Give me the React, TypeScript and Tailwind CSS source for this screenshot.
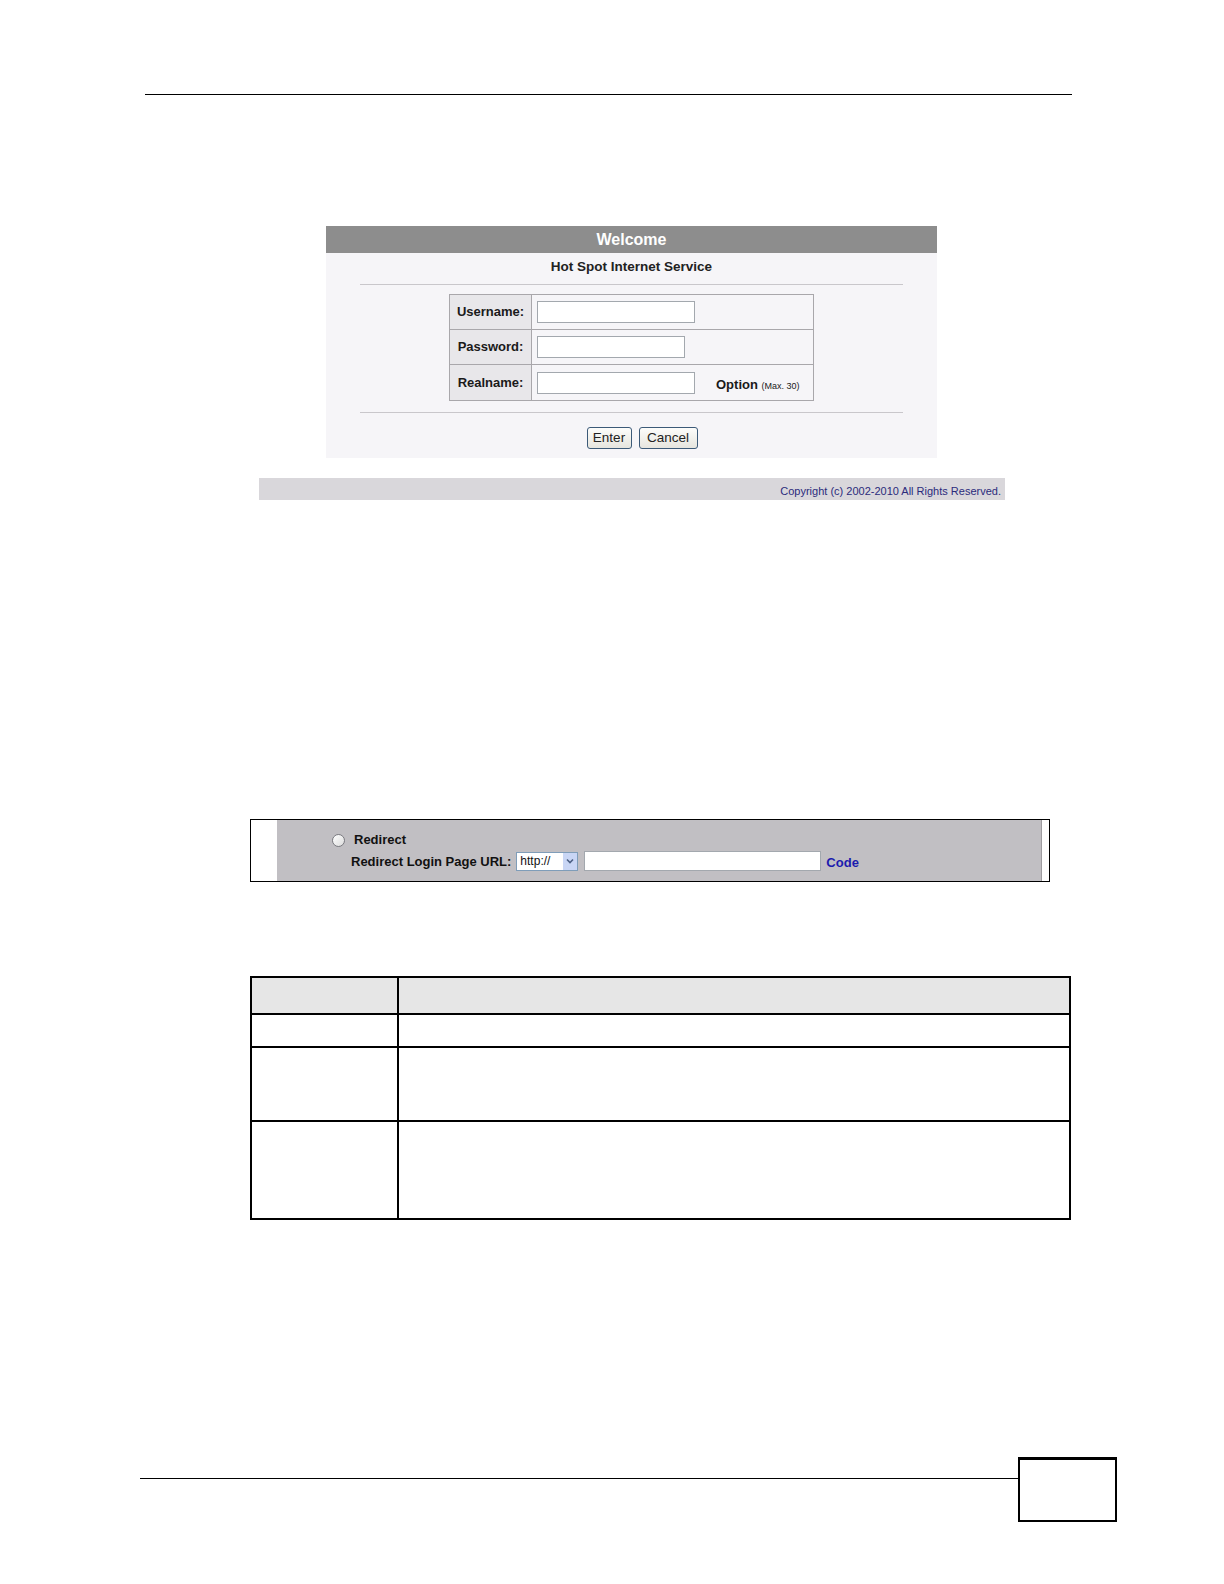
import React from "react";

const F = { fontFamily: '"Liberation Sans", Arial, sans-serif' };

function LoginRow({ label, inputW, extra, last }: { label: string; inputW: string; extra?: React.ReactNode; last?: boolean }) {
  return (
    <div className={`flex h-[35px] ${last ? "" : "border-b border-[#a9a7ab]"}`}>
      <div className="w-[82px] shrink-0 bg-[#e8e7ea] border-r border-[#a9a7ab] flex items-center justify-center text-[13px] font-bold text-[#1a1a1a]">
        {label}
      </div>
      <div className="flex-1 flex items-center pl-[5px]">
        <div className={`${inputW} h-[22px] bg-white border border-[#a3a8ae]`} />
        {extra}
      </div>
    </div>
  );
}

export default function App() {
  return (
    <div className="w-[1224px] h-[1584px] bg-white overflow-hidden" style={F}>
      {/* top rule */}
      <div className="pt-[94px] pl-[145px]">
        <div className="w-[927px] h-px bg-black" />
      </div>

      {/* Welcome login box */}
      <div className="ml-[326px] mt-[131px] w-[611px]">
        <div className="h-[27px] bg-[#8d8d8d] text-white font-bold text-[16px] leading-[27px] text-center">Welcome</div>
        <div className="bg-[#f6f5f8] pt-[5px] pb-[9px] flex flex-col">
          <div className="h-[18px] leading-[18px] text-center text-[13.5px] font-bold text-[#222]">Hot Spot Internet Service</div>
          <div className="mt-[8px] mx-[34px] h-px bg-[#c9c7cb]" />
          <div className="mt-[9px] ml-[123px] w-[365px] border border-[#a9a7ab] flex flex-col">
            <LoginRow label="Username:" inputW="w-[158px]" />
            <LoginRow label="Password:" inputW="w-[148px]" />
            <LoginRow
              label="Realname:"
              inputW="w-[158px]"
              last
              extra={
                <span className="ml-[21px] mt-[4px] text-[13px] font-bold text-[#1a1a1a]">
                  Option <span className="text-[9px] font-normal">(Max. 30)</span>
                </span>
              }
            />
          </div>
          <div className="mt-[11px] mx-[34px] h-px bg-[#c9c7cb]" />
          <div className="mt-[14px] flex justify-center gap-[7px] pl-[21px]">
            <button className="w-[45px] h-[22px] rounded-[3px] border border-[#3c5a78] bg-gradient-to-b from-[#fdfdfb] to-[#e6e5de] text-[13.5px] text-[#222]">Enter</button>
            <button className="w-[59px] h-[22px] rounded-[3px] border border-[#3c5a78] bg-gradient-to-b from-[#fdfdfb] to-[#e6e5de] text-[13.5px] text-[#222]">Cancel</button>
          </div>
        </div>
      </div>

      {/* copyright bar */}
      <div className="ml-[259px] mt-[20px] w-[746px] h-[22px] bg-[#d9d7db] flex items-center justify-end pr-[4px] pt-[5px]">
        <span className="text-[11px] text-[#2b2b7c]">Copyright (c) 2002-2010 All Rights Reserved.</span>
      </div>

      {/* Redirect box */}
      <div className="ml-[250px] mt-[319px] w-[800px] h-[63px] border border-black flex">
        <div className="w-[26px] bg-white" />
        <div className="flex-1 bg-[#c1bfc3] border-r border-[#9e9ca0] pt-[12px] flex flex-col">
          <div className="h-[16px] flex items-center pl-[55px]">
            <span className="w-[13px] h-[13px] rounded-full border border-[#7a7a80] bg-gradient-to-br from-[#ffffff] to-[#dcdcdc]" />
            <span className="ml-[9px] text-[13px] font-bold text-[#111]">Redirect</span>
          </div>
          <div className="mt-[3px] h-[20px] flex items-center pl-[74px]">
            <span className="text-[13px] font-bold text-[#111] mt-[2px]">Redirect Login Page URL:</span>
            <div className="ml-[5px] w-[62px] h-[19px] bg-white border border-[#7f9db9] flex items-center">
              <span className="flex-1 pl-[3px] text-[12px] text-[#111]">http://</span>
              <span className="w-[14px] h-[17px] bg-[#c9d6f5] flex items-center justify-center">
                <svg width="8" height="6" viewBox="0 0 8 6">
                  <path d="M1 1.5 L4 4.5 L7 1.5" fill="none" stroke="#4d6185" strokeWidth="1.6" />
                </svg>
              </span>
            </div>
            <div className="ml-[6px] w-[237px] h-[20px] bg-white border border-[#a3a8ae]" />
            <span className="ml-[5px] text-[13px] font-bold text-[#1c1cae] mt-[3px]">Code</span>
          </div>
        </div>
        <div className="w-[7px] bg-white" />
      </div>

      {/* description table */}
      <div className="ml-[250px] mt-[94px] w-[821px]">
        <table className="w-full border-collapse">
          <tbody>
            <tr className="h-[37px] bg-[#e6e6e6]">
              <td className="w-[147px] border-2 border-black"></td>
              <td className="border-2 border-black"></td>
            </tr>
            <tr className="h-[33px]">
              <td className="border-2 border-black"></td>
              <td className="border-2 border-black"></td>
            </tr>
            <tr className="h-[74px]">
              <td className="border-2 border-black"></td>
              <td className="border-2 border-black"></td>
            </tr>
            <tr className="h-[98px]">
              <td className="border-2 border-black"></td>
              <td className="border-2 border-black"></td>
            </tr>
          </tbody>
        </table>
      </div>

      {/* footer */}
      <div className="ml-[140px] mt-[237px] flex items-start">
        <div className="w-[878px] mt-[21px] h-px bg-black" />
        <div className="w-[99px] h-[65px] border-2 border-t-[3px] border-black" />
      </div>
    </div>
  );
}
